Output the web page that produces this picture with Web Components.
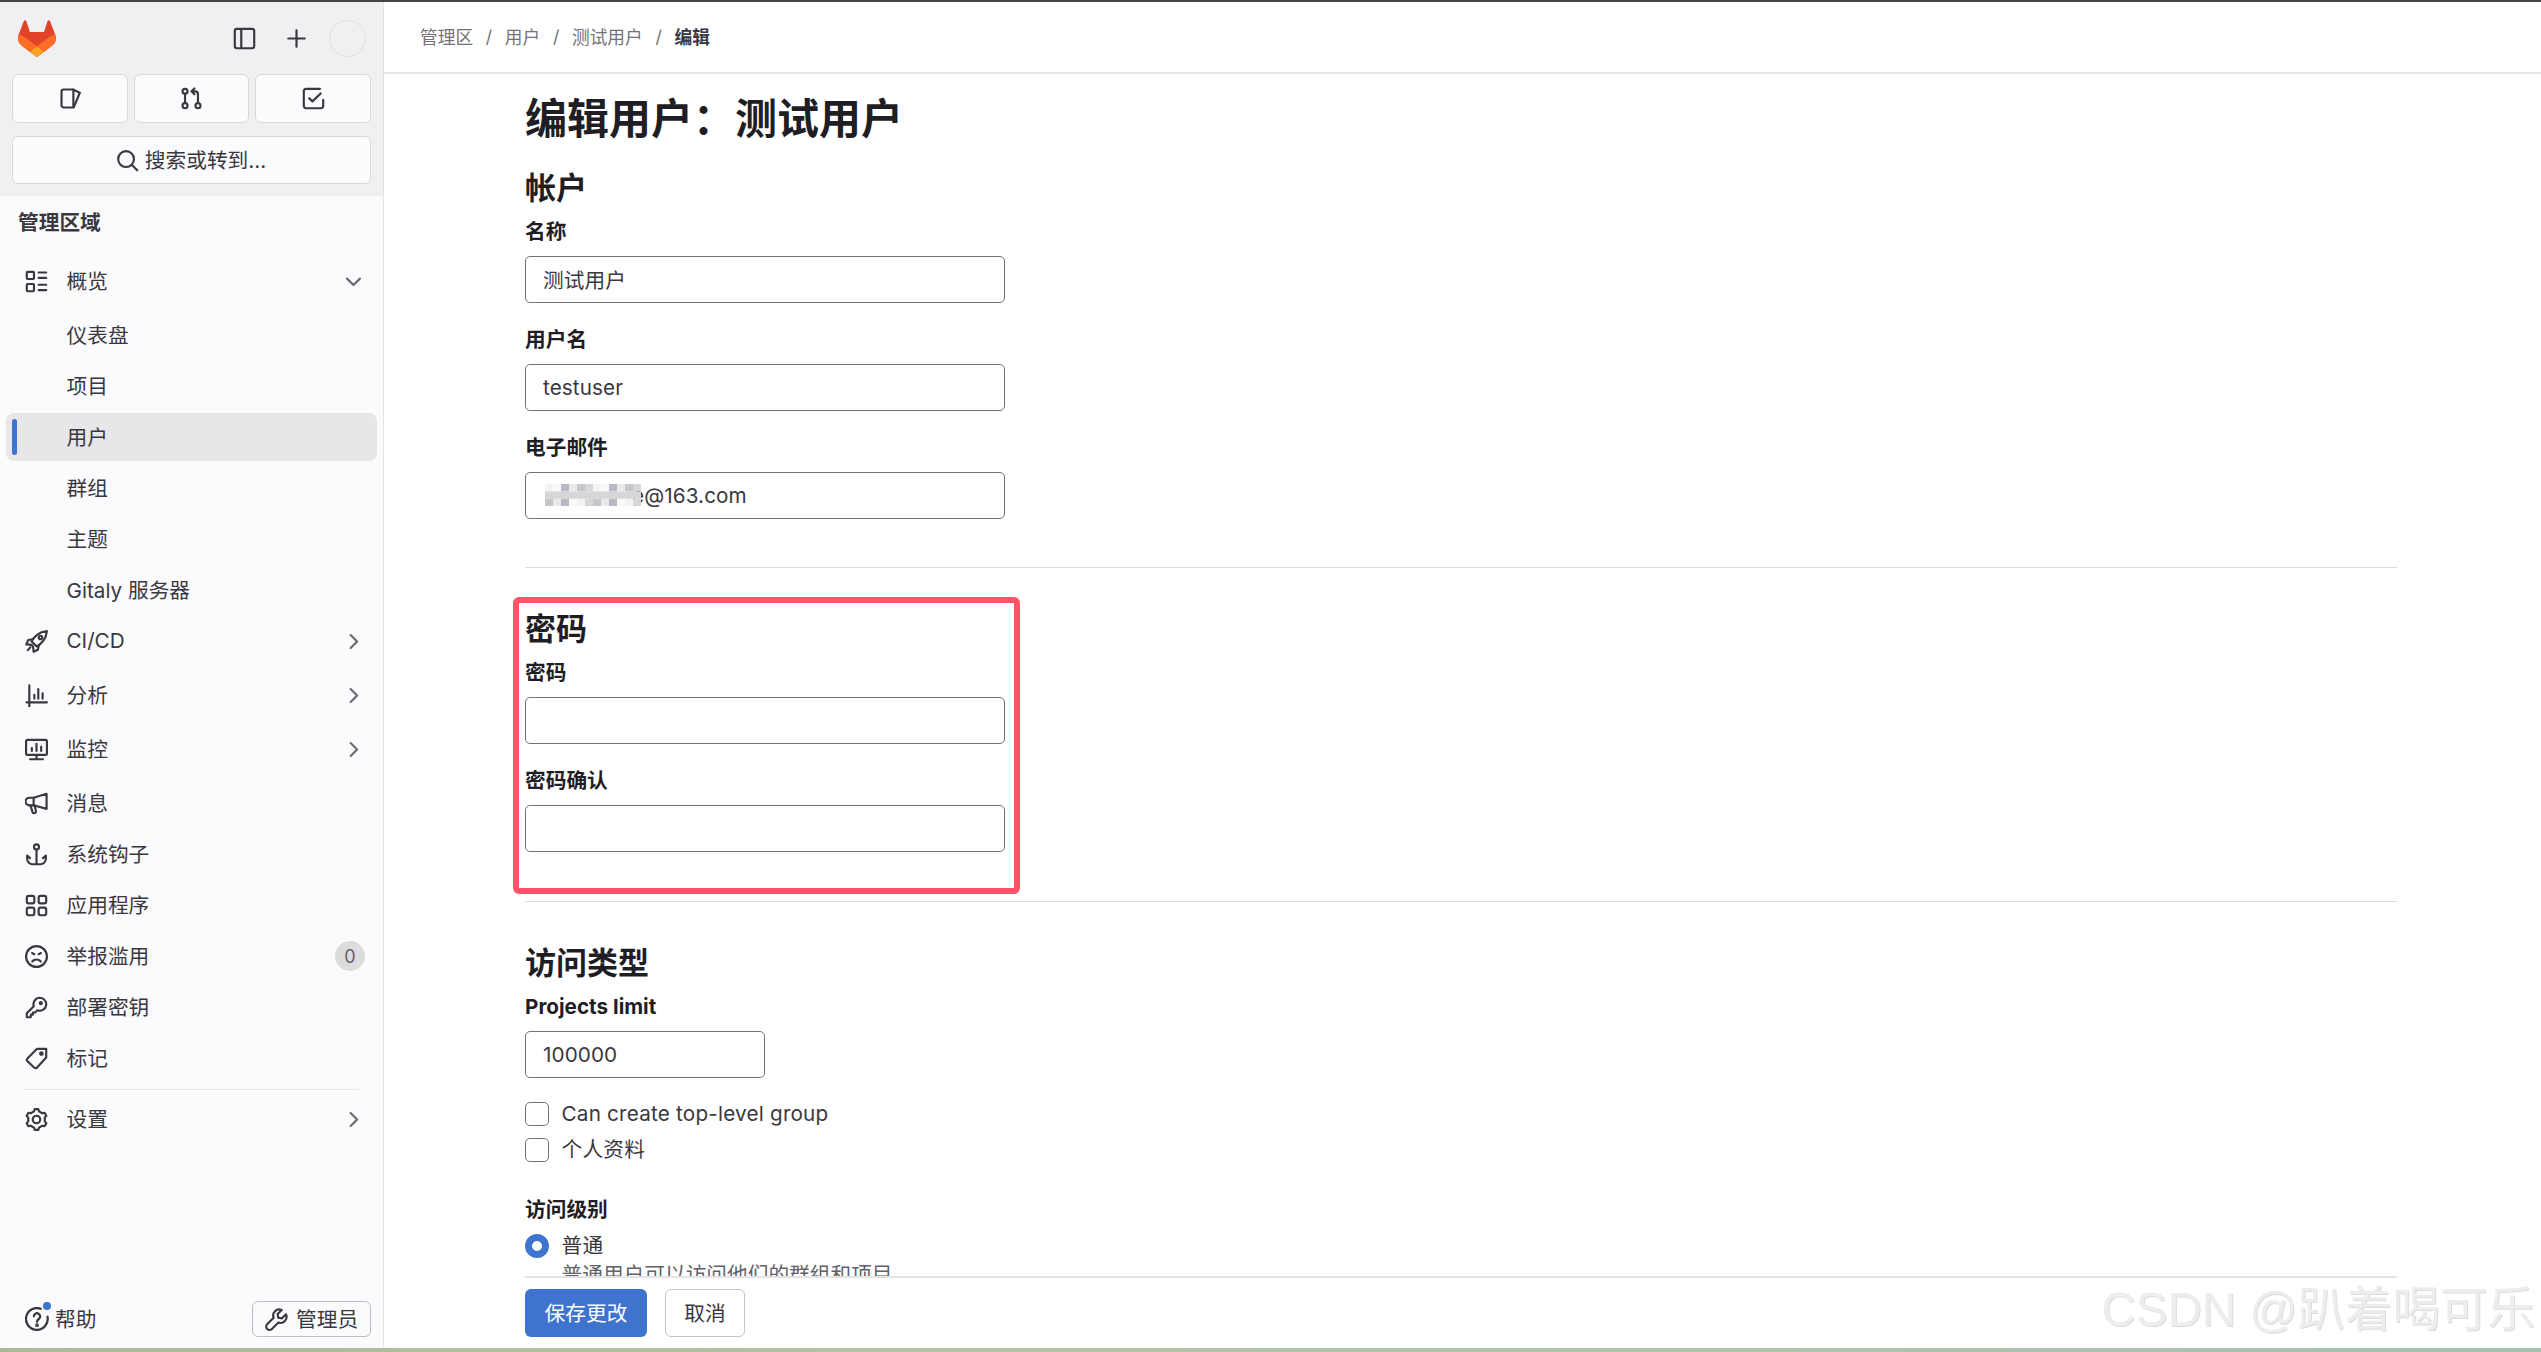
<!DOCTYPE html>
<html lang="zh">
<head>
<meta charset="utf-8">
<title>编辑用户</title>
<style>
  html, body { margin: 0; height: 100%; overflow: hidden; background: #fff; }
  body {
    font-family: Inter, "Noto Sans CJK SC", sans-serif;
    font-size: 20.7px;
    color: #3a383f;
  }
</style>
</head>
<body>
<gl-layout>
  <admin-sidebar slot="sidebar">
    <nav-item icon="overview" chevron="down" group>概览</nav-item>
    <nav-item>仪表盘</nav-item>
    <nav-item>项目</nav-item>
    <nav-item active>用户</nav-item>
    <nav-item>群组</nav-item>
    <nav-item>主题</nav-item>
    <nav-item>Gitaly 服务器</nav-item>
    <nav-item icon="rocket" chevron="right" group>CI/CD</nav-item>
    <nav-item icon="chart" chevron="right" group>分析</nav-item>
    <nav-item icon="monitor" chevron="right" group>监控</nav-item>
    <nav-item icon="bullhorn">消息</nav-item>
    <nav-item icon="hook">系统钩子</nav-item>
    <nav-item icon="apps">应用程序</nav-item>
    <nav-item icon="sad" badge="0">举报滥用</nav-item>
    <nav-item icon="key">部署密钥</nav-item>
    <nav-item icon="tag">标记</nav-item>
    <nav-divider></nav-divider>
    <nav-item icon="gear" chevron="right">设置</nav-item>
  </admin-sidebar>

  <page-header slot="header">
    <a>管理区</a><a>用户</a><a>测试用户</a><a>编辑</a>
  </page-header>

  <user-form slot="content">
    <form-title>编辑用户：测试用户</form-title>

    <form-section style="margin-top:26px" title="帐户">
      <form-field label="名称" value="测试用户"></form-field>
      <form-field label="用户名" value="testuser"></form-field>
      <form-field label="电子邮件" value="e@163.com" masked></form-field>
    </form-section>

    <form-rule style="margin-top:48px"></form-rule>

    <form-section style="margin-top:43px" title="密码" marked>
      <form-field label="密码"></form-field>
      <form-field label="密码确认"></form-field>
    </form-section>

    <form-rule style="margin-top:49px"></form-rule>

    <form-section style="margin-top:43px" title="访问类型">
      <form-field label="Projects limit" value="100000" narrow></form-field>
      <check-row style="margin-top:24px">Can create top-level group</check-row>
      <check-row style="margin-top:12px">个人资料</check-row>
      <form-label style="margin-top:33px">访问级别</form-label>
      <check-row style="margin-top:11px" radio help="普通用户可以访问他们的群组和项目">普通</check-row>
    </form-section>
  </user-form>

  <form-actions slot="footer"></form-actions>
</gl-layout>

<csdn-mark>CSDN @趴着喝可乐</csdn-mark>

<script>
// gear outline is easier to compute than to write by hand
function gearPath() {
  const pts = [];
  for (let i = 0; i < 6; i++) {
    const a = (i * 60 - 90) * Math.PI / 180;
    [[-0.3, 5.9], [-0.17, 7.3], [0.17, 7.3], [0.3, 5.9]].forEach(([d, r]) => {
      pts.push((8 + r * Math.cos(a + d)).toFixed(2) + " " + (8 + r * Math.sin(a + d)).toFixed(2));
    });
  }
  return "M" + pts.join("L") + "Z";
}

const ICONS = {
  sidebar: `<rect x="1.25" y="1.25" width="13.5" height="13.5" rx="1.5"/><path d="M5.75 1.5v13"/>`,
  plus: `<path d="M8 2.25v11.5M2.25 8h11.5"/>`,
  issues: `<path d="M3.25 1.75h6.75v12.5H3.25A1.5 1.5 0 0 1 1.75 12.75V3.25a1.5 1.5 0 0 1 1.5-1.5z"/><path d="M10 1.9l4.5 2.1-4.2 10"/>`,
  merge: `<circle cx="3.5" cy="3" r="1.75"/><circle cx="3.5" cy="13" r="1.75"/><circle cx="12.5" cy="13" r="1.75"/><path d="M3.5 4.75v6.5M12.5 11.25V5a2 2 0 0 0-2-2H8.25M10 1L8 3l2 2"/>`,
  todo: `<path d="M12.5 1.25H2.75a1.5 1.5 0 0 0-1.5 1.5v10.5a1.5 1.5 0 0 0 1.5 1.5h10.5a1.5 1.5 0 0 0 1.5-1.5V9"/><path d="M5 7.75l2.25 2.25 5.75-5.5"/>`,
  search: `<circle cx="7" cy="7" r="5.5"/><path d="M11 11l3.75 3.75"/>`,
  overview: `<rect x="1.25" y="1.25" width="5" height="5" rx=".6"/><rect x="1.25" y="9.75" width="5" height="5" rx=".6"/><path d="M9.5 1.75h5.25M9.5 5.5h5.25M9.5 10.25h5.25M9.5 14h5.25"/>`,
  rocket: `<path d="M8.6 3.2C10.5 1.7 12.8 1 15.25.75 15 3.2 14.3 5.5 12.8 7.4c-1.2 1.6-2.8 3-4.6 4.1L4.5 7.8C5.6 6 7 4.4 8.6 3.2z"/><circle cx="10.8" cy="5.2" r="1.2"/><path d="M5.4 6.4L2.2 7 .9 10l3.8.3M9.6 10.6l-.6 3.2-3 1.4-.4-3.8M3.8 11.9L2 14"/>`,
  chart: `<path d="M1 12.75h14.25M3 1v14.75M6.5 7.5v2.75M9.25 3.5v6.75M12.25 6.5v3.75"/>`,
  monitor: `<rect x=".75" y="1.25" width="14.5" height="10.5" rx="1"/><path d="M3.5 14.75h9M8 11.75v3M4.75 9V7M8 9V4M11.25 9V6"/>`,
  bullhorn: `<path d="M15 1.25v10.5L6 9.25H3A2.25 2.25 0 0 1 3 4h3z"/><path d="M6 4v5.25M3.75 9.25l1.5 4.75a1 1 0 0 0 1.25.75l.5-.2a1 1 0 0 0 .6-1.3L6.75 9.5"/>`,
  hook: `<circle cx="8" cy="2.75" r="1.75"/><path d="M8 4.5v10.25M8 14.75h-2.5A3.75 3.75 0 0 1 1.5 11V8.75L3.5 10.5M8 14.75h2.5a3.75 3.75 0 0 0 4-3.75V8.75L12.5 10.5"/>`,
  apps: `<rect x="1.25" y="1.25" width="5.25" height="5.25" rx="1.3"/><rect x="9.5" y="1.25" width="5.25" height="5.25" rx="1.3"/><rect x="1.25" y="9.5" width="5.25" height="5.25" rx="1.3"/><rect x="9.5" y="9.5" width="5.25" height="5.25" rx="1.3"/>`,
  sad: `<circle cx="8" cy="8" r="7.25"/><path d="M5 11.5c1.6-1.9 4.4-1.9 6 0M4.9 5.6l1.6.8M11.1 5.6l-1.6.8"/>`,
  key: `<path d="M10.25 1.25a4.5 4.5 0 1 1-1.6 8.7L7 11.5H5.5V13H4v1.75H1.25V12l4.85-4.85a4.5 4.5 0 0 1 4.15-5.9z"/><circle cx="11" cy="5" r=".7"/>`,
  tag: `<path d="M14.75 1.25v6.1L8.4 14.2a1.5 1.5 0 0 1-2.1.05L1.8 9.9a1.5 1.5 0 0 1 0-2.1l6.6-6.55z"/><circle cx="11.4" cy="4.6" r=".9"/>`,
  gear: `<path d="${gearPath()}"/><circle cx="8" cy="8" r="2.6"/>`,
  down: `<path d="M3.5 6l4.5 4.5L12.5 6"/>`,
  right: `<path d="M6 3.5L10.5 8 6 12.5"/>`,
  help: `<path d="M10.5 1.2A7.25 7.25 0 1 0 15 6.5"/><path d="M5.9 6.2a2.1 2.1 0 1 1 3.3 1.8c-.8.5-1.2 1-1.2 1.9"/><circle cx="8" cy="12.1" r=".5"/>`,
  wrench: `<path d="M14.6 4.4l-2.8 2.8-2.6-.4-.4-2.6 2.8-2.8a4.2 4.2 0 0 0-5.6 5.4l-4.5 4.5a2.3 2.3 0 0 0 3.3 3.3l4.5-4.5a4.2 4.2 0 0 0 5.3-5.7z"/>`,
};

class GlIcon extends HTMLElement {
  connectedCallback() {
    const size = this.getAttribute("size") || 23;
    this.attachShadow({ mode: "open" }).innerHTML = `
      <style>
        :host { display: inline-flex; flex: none; width: ${size}px; height: ${size}px; }
        svg { width: 100%; height: 100%; fill: none; stroke: currentColor; stroke-width: 1.5; stroke-linecap: round; stroke-linejoin: round; }
      </style>
      <svg viewBox="0 0 16 16">${ICONS[this.getAttribute("name")] || ""}</svg>`;
  }
}
customElements.define("gl-icon", GlIcon);

class GlLayout extends HTMLElement {
  constructor() {
    super();
    this.attachShadow({ mode: "open" }).innerHTML = `
      <style>
        :host { display: flex; flex-direction: column; height: 100vh; }
        .top { height: 2px; flex: none; background: #444; }
        .bottom { height: 4px; flex: none; background: linear-gradient(90deg, #a9bb96, #b4c4a6 40%, #a7c2b2 100%); }
        .body { flex: 1; min-height: 0; display: flex; }
        .main { flex: 1; min-width: 0; display: flex; flex-direction: column; position: relative; }
        .content { flex: 1; min-height: 0; overflow: hidden; padding: 0 144px 0 141px; }
      </style>
      <div class="top"></div>
      <div class="body">
        <slot name="sidebar"></slot>
        <div class="main">
          <slot name="header"></slot>
          <div class="content"><slot name="content"></slot></div>
          <slot name="footer"></slot>
        </div>
      </div>
      <div class="bottom"></div>`;
  }
}
customElements.define("gl-layout", GlLayout);

class AdminSidebar extends HTMLElement {
  constructor() {
    super();
    this.attachShadow({ mode: "open" }).innerHTML = `
      <style>
        :host { display: flex; flex-direction: column; flex: none; width: 383px; box-sizing: content-box; border-right: 1px solid #e3e3e6; background: #fbfafd; color: #3a383f; }
        .head { background: #f0f0f3; padding: 0 12px 12px; }
        .brand { height: 72px; display: flex; align-items: center; }
        .logo { width: 38px; height: 37px; margin: 0 0 0 6px; }
        .tools { margin-left: auto; display: flex; align-items: center; }
        .tools gl-icon:nth-child(1) { margin-right: 29px; }
        .tools gl-icon:nth-child(2) { margin-right: 21px; }
        .avatar { width: 35px; height: 35px; border-radius: 50%; border: 1px solid #e0e0e3; margin-right: 5px; }
        .quick { display: grid; grid-template-columns: 116px 115px 116px; gap: 6px; }
        .btn { height: 49px; box-sizing: border-box; border: 1px solid #d9d9dc; border-radius: 6px; background: #fbfafd; display: flex; align-items: center; justify-content: center; }
        .search { margin-top: 13px; height: 48px; gap: 6px; padding-right: 1px; }
        .search span { padding-bottom: 3px; }
        .title { font-weight: 700; line-height: 28px; margin: 13px 0 20px 18px; }
        nav { display: flex; flex-direction: column; gap: 3px; padding: 0 6px; }
        .foot { margin-top: auto; padding: 0 12px 11px 25px; display: flex; align-items: center; justify-content: space-between; }
        .help { display: flex; align-items: center; gap: 6px; position: relative; }
        .help span { padding-bottom: 3px; }
        .help i { position: absolute; left: 18px; top: -1px; width: 8px; height: 8px; border-radius: 50%; background: #3e74cd; }
        .admin { display: flex; align-items: center; gap: 8px; height: 36px; box-sizing: border-box; padding: 0 10px 0 12px; border: 1px solid #bfbfc3; border-radius: 6px; width: 119px; white-space: nowrap; }
        .admin span { padding-bottom: 2px; }
      </style>
      <div class="head">
        <div class="brand">
          <svg class="logo" viewBox="0 0 25 24">
            <path d="m24.507 9.5-.034-.09L21.082.562a.896.896 0 0 0-1.694.091l-2.29 7.01H7.825L5.535.653a.898.898 0 0 0-1.694-.09L.451 9.411.416 9.5a6.297 6.297 0 0 0 2.09 7.278l.012.01.03.022 5.16 3.867 2.56 1.935 1.554 1.176a1.051 1.051 0 0 0 1.268 0l1.555-1.176 2.56-1.935 5.197-3.89.014-.01A6.297 6.297 0 0 0 24.507 9.5Z" fill="#E24329"/>
            <path d="m24.507 9.5-.034-.09a11.44 11.44 0 0 0-4.56 2.051l-7.447 5.632 4.742 3.584 5.197-3.89.014-.01A6.297 6.297 0 0 0 24.507 9.5Z" fill="#FC6D26"/>
            <path d="m7.707 20.677 2.56 1.935 1.555 1.176a1.051 1.051 0 0 0 1.268 0l1.555-1.176 2.56-1.935-4.743-3.584-4.755 3.584Z" fill="#FCA326"/>
            <path d="M5.01 11.461a11.43 11.43 0 0 0-4.56-2.05L.416 9.5a6.297 6.297 0 0 0 2.09 7.278l.012.01.03.022 5.16 3.867 4.745-3.584-7.444-5.632Z" fill="#FC6D26"/>
          </svg>
          <div class="tools">
            <gl-icon name="sidebar"></gl-icon>
            <gl-icon name="plus"></gl-icon>
            <div class="avatar"></div>
          </div>
        </div>
        <div class="quick">
          <div class="btn"><gl-icon name="issues"></gl-icon></div>
          <div class="btn"><gl-icon name="merge"></gl-icon></div>
          <div class="btn"><gl-icon name="todo"></gl-icon></div>
        </div>
        <div class="btn search"><gl-icon name="search"></gl-icon><span>搜索或转到...</span></div>
      </div>
      <div class="title">管理区域</div>
      <nav><slot></slot></nav>
      <div class="foot">
        <div class="help"><gl-icon name="help" size="24"></gl-icon><i></i><span>帮助</span></div>
        <div class="admin"><gl-icon name="wrench"></gl-icon><span>管理员</span></div>
      </div>`;
  }
}
customElements.define("admin-sidebar", AdminSidebar);

class NavItem extends HTMLElement {
  connectedCallback() {
    const icon = this.getAttribute("icon");
    const chevron = this.getAttribute("chevron");
    const badge = this.getAttribute("badge");
    this.attachShadow({ mode: "open" }).innerHTML = `
      <style>
        :host { display: flex; align-items: center; height: 48px; border-radius: 8px; padding: 0 12px 0 19px; position: relative; }
        :host([group]) { margin-bottom: 3px; }
        :host([active]) { background: #e7e7e9; }
        :host([active])::before { content: ""; position: absolute; left: 6px; top: 6px; bottom: 6px; width: 5px; border-radius: 3px; background: #3e74cd; }
        .ic { width: 41.5px; flex: none; display: flex; }
        .label { flex: 1; white-space: nowrap; padding-bottom: 2px; }
        .chev { color: #6b6a70; }
        .badge { width: 30px; height: 30px; border-radius: 50%; background: #dcdcde; color: #626168; font-size: 18px; display: flex; align-items: center; justify-content: center; }
      </style>
      <span class="ic">${icon ? `<gl-icon name="${icon}"></gl-icon>` : ""}</span>
      <span class="label"><slot></slot></span>
      ${chevron ? `<gl-icon class="chev" name="${chevron}"></gl-icon>` : ""}
      ${badge ? `<span class="badge">${badge}</span>` : ""}`;
  }
}
customElements.define("nav-item", NavItem);

class NavDivider extends HTMLElement {
  constructor() {
    super();
    this.attachShadow({ mode: "open" }).innerHTML = `
      <style>:host { display: block; height: 1px; margin: 4px 18px 2px; background: #e6e6e9; }</style>`;
  }
}
customElements.define("nav-divider", NavDivider);

class PageHeader extends HTMLElement {
  connectedCallback() {
    const crumbs = [...this.querySelectorAll("a")].map((a) => a.textContent);
    this.attachShadow({ mode: "open" }).innerHTML = `
      <style>
        :host { display: flex; flex: none; align-items: center; height: 70px; box-sizing: content-box; border-bottom: 2px solid #e6e6e8; padding-left: 36px; font-size: 17.7px; color: #737278; }
        span { padding-bottom: 2px; }
        .sep { margin: 0 12.7px; }
        .last { color: #3a383f; font-weight: 700; }
      </style>
      ${crumbs.map((c, i) => i === crumbs.length - 1
        ? `<span class="last">${c}</span>`
        : `<span>${c}</span><span class="sep">/</span>`).join("")}`;
  }
}
customElements.define("page-header", PageHeader);

class UserForm extends HTMLElement {
  constructor() {
    super();
    this.attachShadow({ mode: "open" }).innerHTML = `
      <style>:host { display: block; padding-top: 19px; }</style><slot></slot>`;
  }
}
customElements.define("user-form", UserForm);

class FormTitle extends HTMLElement {
  constructor() {
    super();
    this.attachShadow({ mode: "open" }).innerHTML = `
      <style>:host { display: block; font-size: 42px; font-weight: 700; line-height: 51px; color: #1f1e24; }</style><slot></slot>`;
  }
}
customElements.define("form-title", FormTitle);

class FormSection extends HTMLElement {
  connectedCallback() {
    this.attachShadow({ mode: "open" }).innerHTML = `
      <style>
        :host { display: block; position: relative; }
        h2 { margin: 0 0 -11px; font-size: 31px; font-weight: 700; line-height: 36px; color: #1f1e24; }
        .mark { position: absolute; left: -12px; top: -14px; width: 507px; height: 297px; box-sizing: border-box; border: 6px solid #ff5468; border-radius: 6px; pointer-events: none; }
      </style>
      <h2>${this.getAttribute("title")}</h2>
      <slot></slot>
      ${this.hasAttribute("marked") ? `<div class="mark"></div>` : ""}`;
  }
}
customElements.define("form-section", FormSection);

class FormLabel extends HTMLElement {
  constructor() {
    super();
    this.attachShadow({ mode: "open" }).innerHTML = `
      <style>:host { display: block; font-weight: 700; line-height: 27px; padding-top: 1px; color: #1f1e24; }</style><slot></slot>`;
  }
}
customElements.define("form-label", FormLabel);

class FormField extends HTMLElement {
  connectedCallback() {
    const value = this.getAttribute("value") || "";
    this.attachShadow({ mode: "open" }).innerHTML = `
      <style>
        :host { display: block; margin-top: 22px; }
        .box { margin-top: 11px; height: 47px; width: 480px; box-sizing: border-box; border: 1px solid #727176; border-radius: 5px; padding: 0 17px 1px; display: flex; align-items: center; color: #3a383f; white-space: nowrap; letter-spacing: .1px; }
        :host([narrow]) .box { width: 240px; }
        .mosaic { width: 96px; height: 22px; flex: none; margin-left: 2px; margin-right: -9px; position: relative; }
      </style>
      <form-label>${this.getAttribute("label")}</form-label>
      <div class="box">${this.hasAttribute("masked") ? `<blur-mosaic class="mosaic"></blur-mosaic>` : ""}<span>${value}</span></div>`;
  }
}
customElements.define("form-field", FormField);

// pixelated patch that hides part of the email address
class BlurMosaic extends HTMLElement {
  constructor() {
    super();
    const cols = 12, rows = 3;
    const shades = ["#f3f2f4", "#d8d5d9", "#c9c6cb", "#e9e8ea", "#b9bac4", "#fafafa"];
    let rects = "";
    for (let y = 0; y < rows; y++) {
      for (let x = 0; x < cols; x++) {
        rects += `<rect x="${x * 8}" y="${y * 7.4}" width="8" height="7.4" fill="${shades[(x * 5 + y * 7 + x * y) % shades.length]}"/>`;
      }
    }
    this.attachShadow({ mode: "open" }).innerHTML = `
      <style>:host { display: block; } svg { display: block; width: 100%; height: 100%; }</style>
      <svg viewBox="0 0 96 22">${rects}</svg>`;
  }
}
customElements.define("blur-mosaic", BlurMosaic);

class FormRule extends HTMLElement {
  constructor() {
    super();
    this.attachShadow({ mode: "open" }).innerHTML = `
      <style>:host { display: block; height: 1px; background: #dcdcde; }</style>`;
  }
}
customElements.define("form-rule", FormRule);

class CheckRow extends HTMLElement {
  connectedCallback() {
    const radio = this.hasAttribute("radio");
    const help = this.getAttribute("help");
    this.attachShadow({ mode: "open" }).innerHTML = `
      <style>
        :host { display: grid; grid-template-columns: 24px 1fr; column-gap: 12.5px; }
        .mark { width: 24px; height: 24px; box-sizing: border-box; border: 1px solid #727176; border-radius: 5px; }
        .mark.radio { border: 7px solid #3e74cd; border-radius: 50%; background: #fff; }
        .text { line-height: 24px; letter-spacing: .2px; }
        .help { grid-column: 2; color: #626168; line-height: 28px; margin-top: 3px; }
      </style>
      <div class="mark ${radio ? "radio" : ""}"></div>
      <div class="text"><slot></slot></div>
      ${help ? `<div class="help">${help}</div>` : ""}`;
  }
}
customElements.define("check-row", CheckRow);

class FormActions extends HTMLElement {
  constructor() {
    super();
    this.attachShadow({ mode: "open" }).innerHTML = `
      <style>
        :host { display: block; flex: none; padding: 0 144px 11px 141px; background: #fff; }
        .row { border-top: 2px solid #e3e3e6; padding-top: 11px; display: flex; gap: 18px; }
        .btn { height: 48px; box-sizing: border-box; border-radius: 6px; display: flex; align-items: center; justify-content: center; padding-bottom: 2px; }
        .primary { width: 122px; background: #3e74cd; color: #fff; }
        .cancel { width: 80px; border: 1px solid #c4c4c7; color: #3a383f; }
      </style>
      <div class="row">
        <div class="btn primary">保存更改</div>
        <div class="btn cancel">取消</div>
      </div>`;
  }
}
customElements.define("form-actions", FormActions);

class CsdnMark extends HTMLElement {
  constructor() {
    super();
    this.attachShadow({ mode: "open" }).innerHTML = `
      <style>
        :host { position: fixed; right: 6px; bottom: 14px; font-family: "Liberation Sans", "Noto Sans CJK SC", sans-serif; font-size: 47.5px; line-height: 56px; color: #ededee; text-shadow: 1px 1px 0 #dcdcde; white-space: nowrap; }
      </style><slot></slot>`;
  }
}
customElements.define("csdn-mark", CsdnMark);
</script>
</body>
</html>
